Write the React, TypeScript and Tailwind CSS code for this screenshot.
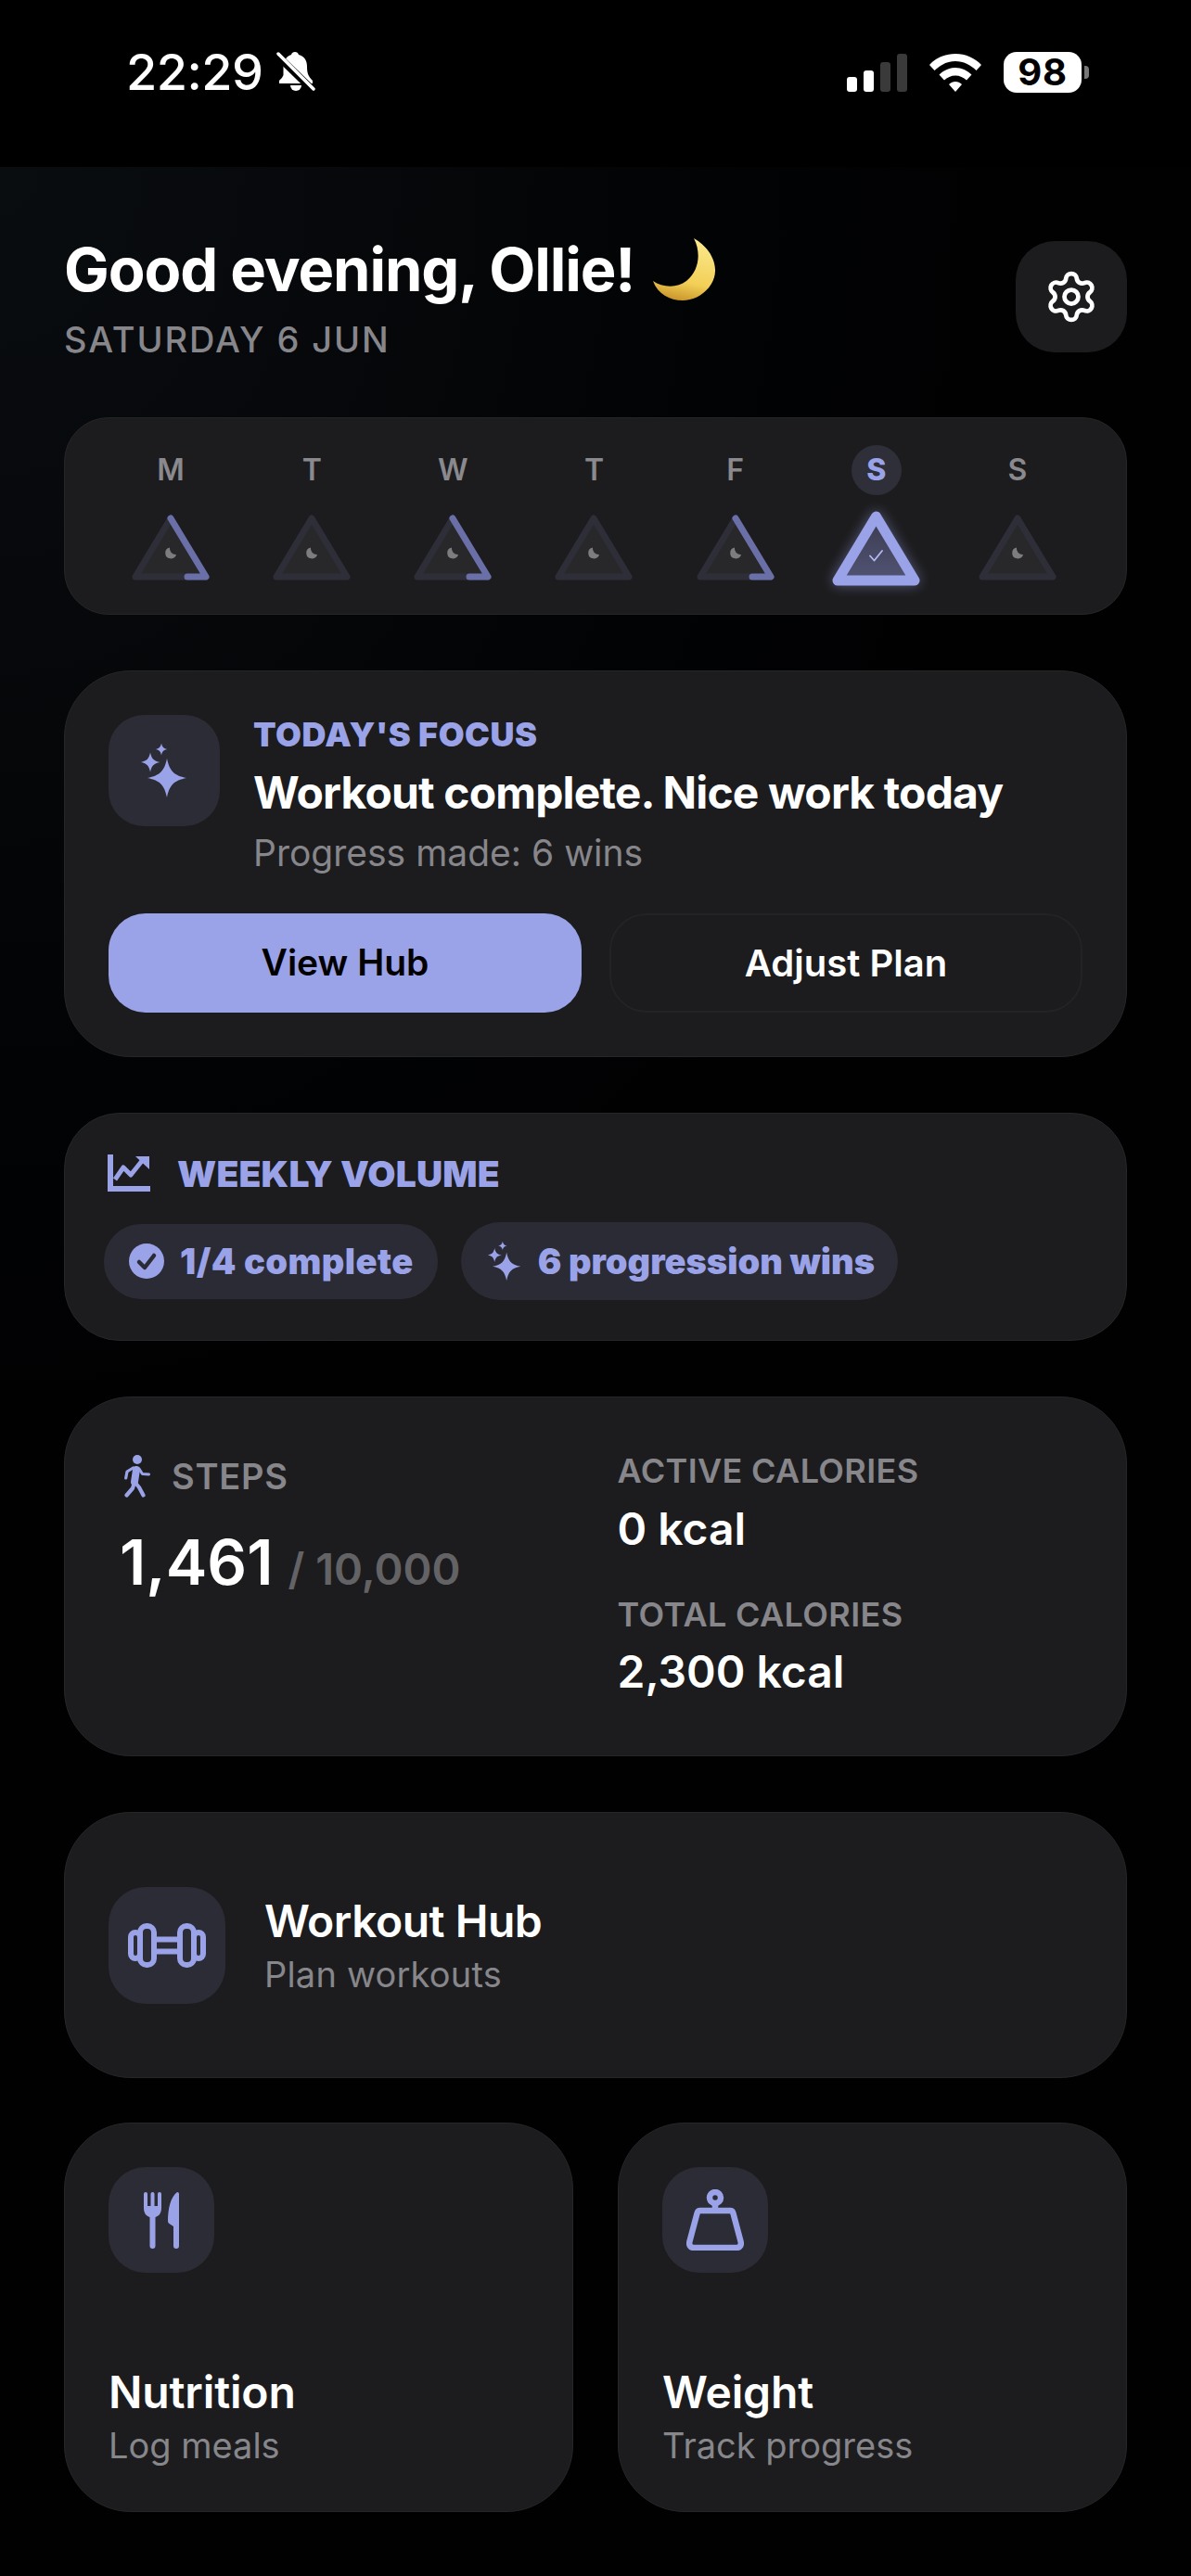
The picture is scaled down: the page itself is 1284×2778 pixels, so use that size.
import React from "react";
import { Settings } from "lucide-react";

const star = (cx: number, cy: number, r: number) =>
  `M${cx} ${cy - r}C${cx + 0.14 * r} ${cy - 0.35 * r} ${cx + 0.35 * r} ${cy - 0.14 * r} ${cx + r} ${cy}C${cx + 0.35 * r} ${cy + 0.14 * r} ${cx + 0.14 * r} ${cy + 0.35 * r} ${cx} ${cy + r}C${cx - 0.14 * r} ${cy + 0.35 * r} ${cx - 0.35 * r} ${cy + 0.14 * r} ${cx - r} ${cy}C${cx - 0.35 * r} ${cy - 0.14 * r} ${cx - 0.14 * r} ${cy - 0.35 * r} ${cx} ${cy - r}Z`;

function Sparkles({ className }: { className?: string }) {
  return (
    <svg viewBox="0 0 50 58" className={className} fill="#9ba3e8">
      <path d={star(28, 37, 21)} />
      <path d={star(10, 20, 10.5)} />
      <path d={star(22, 6, 6.5)} />
    </svg>
  );
}

function Moon() {
  return (
    <svg viewBox="0 0 67 67" className="ml-[20px] w-[67px] h-[67px] -mt-[2px]">
      <defs>
        <linearGradient id="mg" x1="0.6" y1="0" x2="0.4" y2="1">
          <stop offset="0" stopColor="#fbe98c" />
          <stop offset="0.7" stopColor="#f2cf57" />
          <stop offset="1" stopColor="#c9962a" />
        </linearGradient>
      </defs>
      <path
        d="M44 0C62 10 70 28 66 42C61 58 46 67 32 67C18 67 5 60 0 46C10 53 26 54 36 46C50 35 52 15 44 0Z"
        fill="url(#mg)"
      />
    </svg>
  );
}

function SmallMoon() {
  return <path d="M41 36.5a6 6 0 1 0 7 7.5a6.5 6.5 0 0 1 -7 -7.5Z" fill="#7d7d80" />;
}

function Tri({ progress }: { progress?: boolean }) {
  return (
    <svg viewBox="0 0 84 72" className="w-[84px] h-[72px] mt-[20px] mb-[5px]">
      <path
        d="M42 5L80 68H4Z"
        fill="#28282a"
        stroke="#2e2e38"
        strokeWidth="7"
        strokeLinejoin="round"
      />
      {progress && (
        <path
          d="M42 5L80 68H60"
          fill="none"
          stroke="#6a6fa8"
          strokeWidth="7"
          strokeLinecap="round"
          strokeLinejoin="round"
        />
      )}
      <SmallMoon />
    </svg>
  );
}

function ActiveTri() {
  return (
    <svg
      viewBox="0 0 95 82"
      className="w-[95px] h-[82px] mt-[16px] drop-shadow-[0_0_7px_rgba(155,163,232,0.45)]"
    >
      <defs>
        <linearGradient id="ag" x1="0" y1="0" x2="0" y2="1">
          <stop offset="0" stopColor="#3b3c50" />
          <stop offset="1" stopColor="#515373" />
        </linearGradient>
      </defs>
      <path
        d="M47.5 7L89 76H6Z"
        fill="url(#ag)"
        stroke="#9ba3e8"
        strokeWidth="11"
        strokeLinejoin="round"
      />
      <path d="M41 49.5L45.5 54.5L54 44" fill="none" stroke="#b4baf0" strokeWidth="1.8" strokeLinecap="round" strokeLinejoin="round" />
    </svg>
  );
}

const days: { l: string; p?: boolean; a?: boolean }[] = [
  { l: "M", p: true },
  { l: "T" },
  { l: "W", p: true },
  { l: "T" },
  { l: "F", p: true },
  { l: "S", a: true },
  { l: "S" },
];

function Dumbbell() {
  return (
    <svg viewBox="0 0 84 48" className="w-[84px] h-[48px]" fill="none" stroke="#9ba3e8" strokeWidth="6" strokeLinejoin="round">
      <rect x="3" y="10" width="10" height="28" rx="5" />
      <rect x="13" y="3" width="15" height="42" rx="7" />
      <rect x="56" y="3" width="15" height="42" rx="7" />
      <rect x="71" y="10" width="10" height="28" rx="5" />
      <path d="M28 17.500H56M28 30.500H56" />
    </svg>
  );
}

function Cutlery() {
  return (
    <svg viewBox="0 0 38 61" className="w-[38px] h-[61px]" fill="#9ba3e8">
      <path d="M0 2a2 2 0 0 1 4 0V15H7.500V2a2 2 0 0 1 4 0V15H15V2a2 2 0 0 1 4 0V17C19 23 16 26 12.500 27V58a3 3 0 0 1-6 0V27C3 26 0 23 0 17Z" />
      <path d="M36 0c1.200 0 2 .8 2 2V58a3 3 0 0 1-6 0V37L27.500 34c-1-.7-1.500-1.500-1.500-3C26 18 29 5 36 0Z" />
    </svg>
  );
}

function Weight() {
  return (
    <svg viewBox="0 0 62 66" className="w-[62px] h-[66px]" fill="none" stroke="#9ba3e8" strokeWidth="6.500" strokeLinejoin="round">
      <circle cx="31" cy="9" r="6" />
      <path d="M31 15V23" />
      <path d="M15 23H47C49 23 50 24 50.500 26L58.500 56C59.500 60 58 63 54 63H8C4 63 2.500 60 3.500 56L11.500 26C12 24 13 23 15 23Z" />
    </svg>
  );
}

function Walker() {
  return (
    <svg viewBox="0 0 28 46" className="w-[28px] h-[46px] ml-[2px] mr-[2px]" fill="none" stroke="#9ba3e8" strokeLinecap="round" strokeLinejoin="round">
      <circle cx="14" cy="5" r="5" fill="#9ba3e8" stroke="none" />
      <path d="M13 16L11 29" strokeWidth="8" />
      <path d="M9.500 14L3 18L1.700 25" strokeWidth="3.200" />
      <path d="M16 15L19.500 20.500L26.500 21" strokeWidth="3" />
      <path d="M11 29L9 36L2.500 43.500" strokeWidth="4.200" />
      <path d="M11 29L16 35L20.500 43.500" strokeWidth="4.200" />
    </svg>
  );
}

const cardBase = "bg-[#1c1c1e] border border-[#242628]";
const iconBox = "bg-[#2c2c36] flex items-center justify-center";

export default function App() {
  return (
    <div className="w-[1284px] h-[2778px] bg-black overflow-hidden text-white font-['Inter',sans-serif]">
      {/* status bar */}
      <div className="h-[180px] bg-black flex items-start pl-[136px] pr-[110px] pt-[55px]">
        <div className="flex items-center h-[46px]">
          <span className="text-[54px] leading-[46px] font-medium tracking-[-0.01em] font-['Inter',sans-serif]">22:29</span>
          <svg viewBox="0 0 42 44" className="w-[42px] h-[44px] ml-[14px]">
            <path d="M20 0c2 0 3.500 1.200 4 3c6 1.500 9 6 9 13c0 8 2 11 6 15v3H3v-3c2-2 3.500-3.500 4.500-6V16C7.500 9 11 4.500 16 3c.5-1.800 2-3 4-3Z" fill="#fff" />
            <path d="M15 36h12a6 6 0 0 1 -12 0Z" fill="#fff" />
            <path d="M0 3L40 42" stroke="#000" strokeWidth="8" />
            <path d="M2 2L40 40" stroke="#fff" strokeWidth="3.500" strokeLinecap="round" />
          </svg>
        </div>
        <div className="ml-auto flex items-center h-[46px]">
          <div className="flex items-end gap-[7px] h-[41px]">
            <div className="w-[11px] h-[16px] bg-white rounded-[3px]" />
            <div className="w-[11px] h-[23px] bg-white rounded-[3px]" />
            <div className="w-[11px] h-[32px] bg-[#3a3a3a] rounded-[3px]" />
            <div className="w-[11px] h-[41px] bg-[#3a3a3a] rounded-[3px]" />
          </div>
          <svg viewBox="0 0 56 41" className="w-[56px] h-[41px] ml-[24px]" fill="#fff">
            <path d="M28 0C39 0 49 4.500 56 12L50.500 18C44.500 12 36.500 8 28 8S11.500 12 5.500 18L0 12C7 4.500 17 0 28 0Z" />
            <path d="M28 15C34.500 15 41 18 45.500 22.500L40 28.500C37 25.500 32.500 23.500 28 23.500S19 25.500 16 28.500L10.500 22.500C15 18 21.500 15 28 15Z" />
            <path d="M28 30C30.500 30 33 31 35 33L28 41L21 33C23 31 25.500 30 28 30Z" />
          </svg>
          <div className="ml-[24px] w-[84px] h-[44px] bg-white rounded-[14px] flex items-center justify-center text-black text-[40px] font-bold leading-none tracking-[0.02em]">
            98
          </div>
          <div className="ml-[3px] w-[5px] h-[14px] bg-[#777] rounded-r-[4px]" />
        </div>
      </div>

      {/* main */}
      <div className="h-[2598px] px-[69px] pt-[80px] bg-[radial-gradient(ellipse_1100px_1400px_at_0%_0%,#0a0d10_0%,#020305_70%,#010102_100%)]">
        <div className="flex items-start justify-between h-[120px]">
          <div>
            <div className="flex items-center h-[66px] text-[65px] leading-[66px] font-[650] tracking-[-0.017em] whitespace-nowrap -mt-[2px]">
              Good evening, Ollie!
              <Moon />
            </div>
            <div className="mt-[20px] text-[38px] leading-[44px] font-medium tracking-[0.05em] text-[#86868b] whitespace-nowrap">
              SATURDAY 6 JUN
            </div>
          </div>
          <div className={`w-[120px] h-[120px] rounded-[42px] bg-[#1c1c1e] flex items-center justify-center`}>
            <Settings size={60} strokeWidth={1.9} color="#fff" />
          </div>
        </div>

        {/* week */}
        <div className={`${cardBase} mt-[70px] h-[213px] rounded-[48px] pl-[38px] pr-[41px] pt-[29px] grid grid-cols-7`}>
          {days.map((d, i) => (
            <div key={i} className="flex flex-col items-center">
              {d.a ? (
                <div className="w-[54px] h-[54px] rounded-full bg-[#2f2f3a] flex items-center justify-center text-[32px] font-extrabold text-[#9ba3e8] leading-none">
                  {d.l}
                </div>
              ) : (
                <div className="h-[54px] flex items-center text-[32px] font-semibold text-[#8a8a8e] leading-none">{d.l}</div>
              )}
              {d.a ? <ActiveTri /> : <Tri progress={d.p} />}
            </div>
          ))}
        </div>

        {/* focus */}
        <div className={`${cardBase} mt-[60px] h-[417px] rounded-[72px] p-[47px]`}>
          <div className="flex gap-[36px]">
            <div className={`${iconBox} w-[120px] h-[120px] rounded-[38px] shrink-0`}>
              <Sparkles className="w-[50px] h-[58px]" />
            </div>
            <div className="min-w-0">
              <div className="text-[36px] leading-[46px] font-black tracking-[0.015em] text-[#9ba3e8] -mt-[2px]">TODAY'S FOCUS</div>
              <div className="mt-[8px] text-[48px] leading-[64px] font-[650] tracking-[-0.018em] whitespace-nowrap">Workout complete. Nice work today</div>
              <div className="mt-[9px] text-[39px] leading-[48px] font-normal text-[#86868b] whitespace-nowrap">Progress made: 6 wins</div>
            </div>
          </div>
          <div className="grid grid-cols-2 gap-[30px] mt-[41px]">
            <div className="h-[107px] rounded-[40px] bg-[#9ba3e8] flex items-center justify-center text-black text-[39px] font-semibold">View Hub</div>
            <div className="h-[107px] rounded-[40px] border-2 border-[#232325] flex items-center justify-center text-[40px] font-semibold">Adjust Plan</div>
          </div>
        </div>

        {/* weekly */}
        <div className={`${cardBase} mt-[60px] h-[246px] rounded-[60px] pt-[43px] pl-[42px]`}>
          <div className="flex items-center gap-[29px] pl-[4px] h-[42px]">
            <svg viewBox="0 0 46 40" className="w-[46px] h-[40px]" fill="none" stroke="#9ba3e8" strokeWidth="6">
              <path d="M3 0V37H46" />
              <path d="M8 27L17 14L25 22L37 7" strokeWidth="5" strokeLinejoin="round" />
              <path d="M30 2H45V16Z" fill="#9ba3e8" stroke="none" />
            </svg>
            <span className="text-[39px] leading-none font-black tracking-[0.005em] text-[#9ba3e8]">WEEKLY VOLUME</span>
          </div>
          <div className="flex items-center gap-[25px] mt-[32px]">
            <div className="h-[81px] rounded-[40px] bg-[#2b2b36] flex items-center pl-[27px] pr-[26px] gap-[17px]">
              <svg viewBox="0 0 38 38" className="w-[38px] h-[38px]">
                <circle cx="19" cy="19" r="19" fill="#9ba3e8" />
                <path d="M11 20L17 26L27 13" fill="none" stroke="#2b2b36" strokeWidth="4.500" strokeLinecap="round" strokeLinejoin="round" />
              </svg>
              <span className="text-[38px] font-black tracking-[0.012em] text-[#9ba3e8] whitespace-nowrap">1/4 complete</span>
            </div>
            <div className="h-[84px] rounded-[42px] bg-[#2b2b36] flex items-center pl-[29px] pr-[25px] gap-[18px]">
              <Sparkles className="w-[36px] h-[42px]" />
              <span className="text-[38px] font-black text-[#9ba3e8] whitespace-nowrap">6 progression wins</span>
            </div>
          </div>
        </div>

        {/* steps */}
        <div className={`${cardBase} mt-[60px] h-[388px] rounded-[72px] grid grid-cols-2 pl-[59px]`}>
          <div className="pt-[62px] pl-[3px]">
            <div className="flex items-center gap-[21px] h-[46px]">
              <Walker />
              <span className="text-[38px] font-semibold tracking-[0.02em] text-[#86868b] leading-none">STEPS</span>
            </div>
            <div className="mt-[30px] -ml-[3px] flex items-baseline whitespace-nowrap">
              <span className="text-[67px] font-semibold leading-[80px]">1,461</span>
              <span className="ml-[16px] text-[47px] font-semibold text-[#636366]">/ 10,000</span>
            </div>
          </div>
          <div className="pt-[56px] -ml-[6px]">
            <div className="text-[36px] leading-[46px] font-semibold tracking-[0.01em] text-[#86868b] whitespace-nowrap">ACTIVE CALORIES</div>
            <div className="mt-[9px] text-[48px] leading-[62px] font-semibold">0 kcal</div>
            <div className="mt-[38px] text-[36px] leading-[46px] font-semibold tracking-[0.01em] text-[#86868b] whitespace-nowrap">TOTAL CALORIES</div>
            <div className="mt-[8px] text-[48px] leading-[62px] font-semibold">2,300 kcal</div>
          </div>
        </div>

        {/* hub */}
        <div className={`${cardBase} mt-[60px] h-[287px] rounded-[72px] flex items-center pl-[47px] gap-[42px]`}>
          <div className={`${iconBox} w-[126px] h-[126px] rounded-[40px]`}>
            <Dumbbell />
          </div>
          <div>
            <div className="text-[48px] leading-[60px] font-semibold tracking-[-0.01em]">Workout Hub</div>
            <div className="text-[38px] leading-[50px] text-[#86868b] mt-[2px] tracking-[0.005em]">Plan workouts</div>
          </div>
        </div>

        {/* grid */}
        <div className="grid grid-cols-2 gap-[48px] mt-[48px]">
          {[
            { t: "Nutrition", s: "Log meals", I: Cutlery },
            { t: "Weight", s: "Track progress", I: Weight },
          ].map(({ t, s, I }) => (
            <div key={t} className={`${cardBase} h-[420px] rounded-[72px] p-[47px] flex flex-col`}>
              <div className={`${iconBox} w-[114px] h-[114px] rounded-[40px]`}>
                <I />
              </div>
              <div className="mt-auto mb-[-1px]">
                <div className="text-[48px] leading-[60px] font-semibold -mt-[2px] tracking-[-0.003em]">{t}</div>
                <div className="text-[38px] leading-[50px] text-[#86868b] mt-[2px]">{s}</div>
              </div>
            </div>
          ))}
        </div>
      </div>
    </div>
  );
}
